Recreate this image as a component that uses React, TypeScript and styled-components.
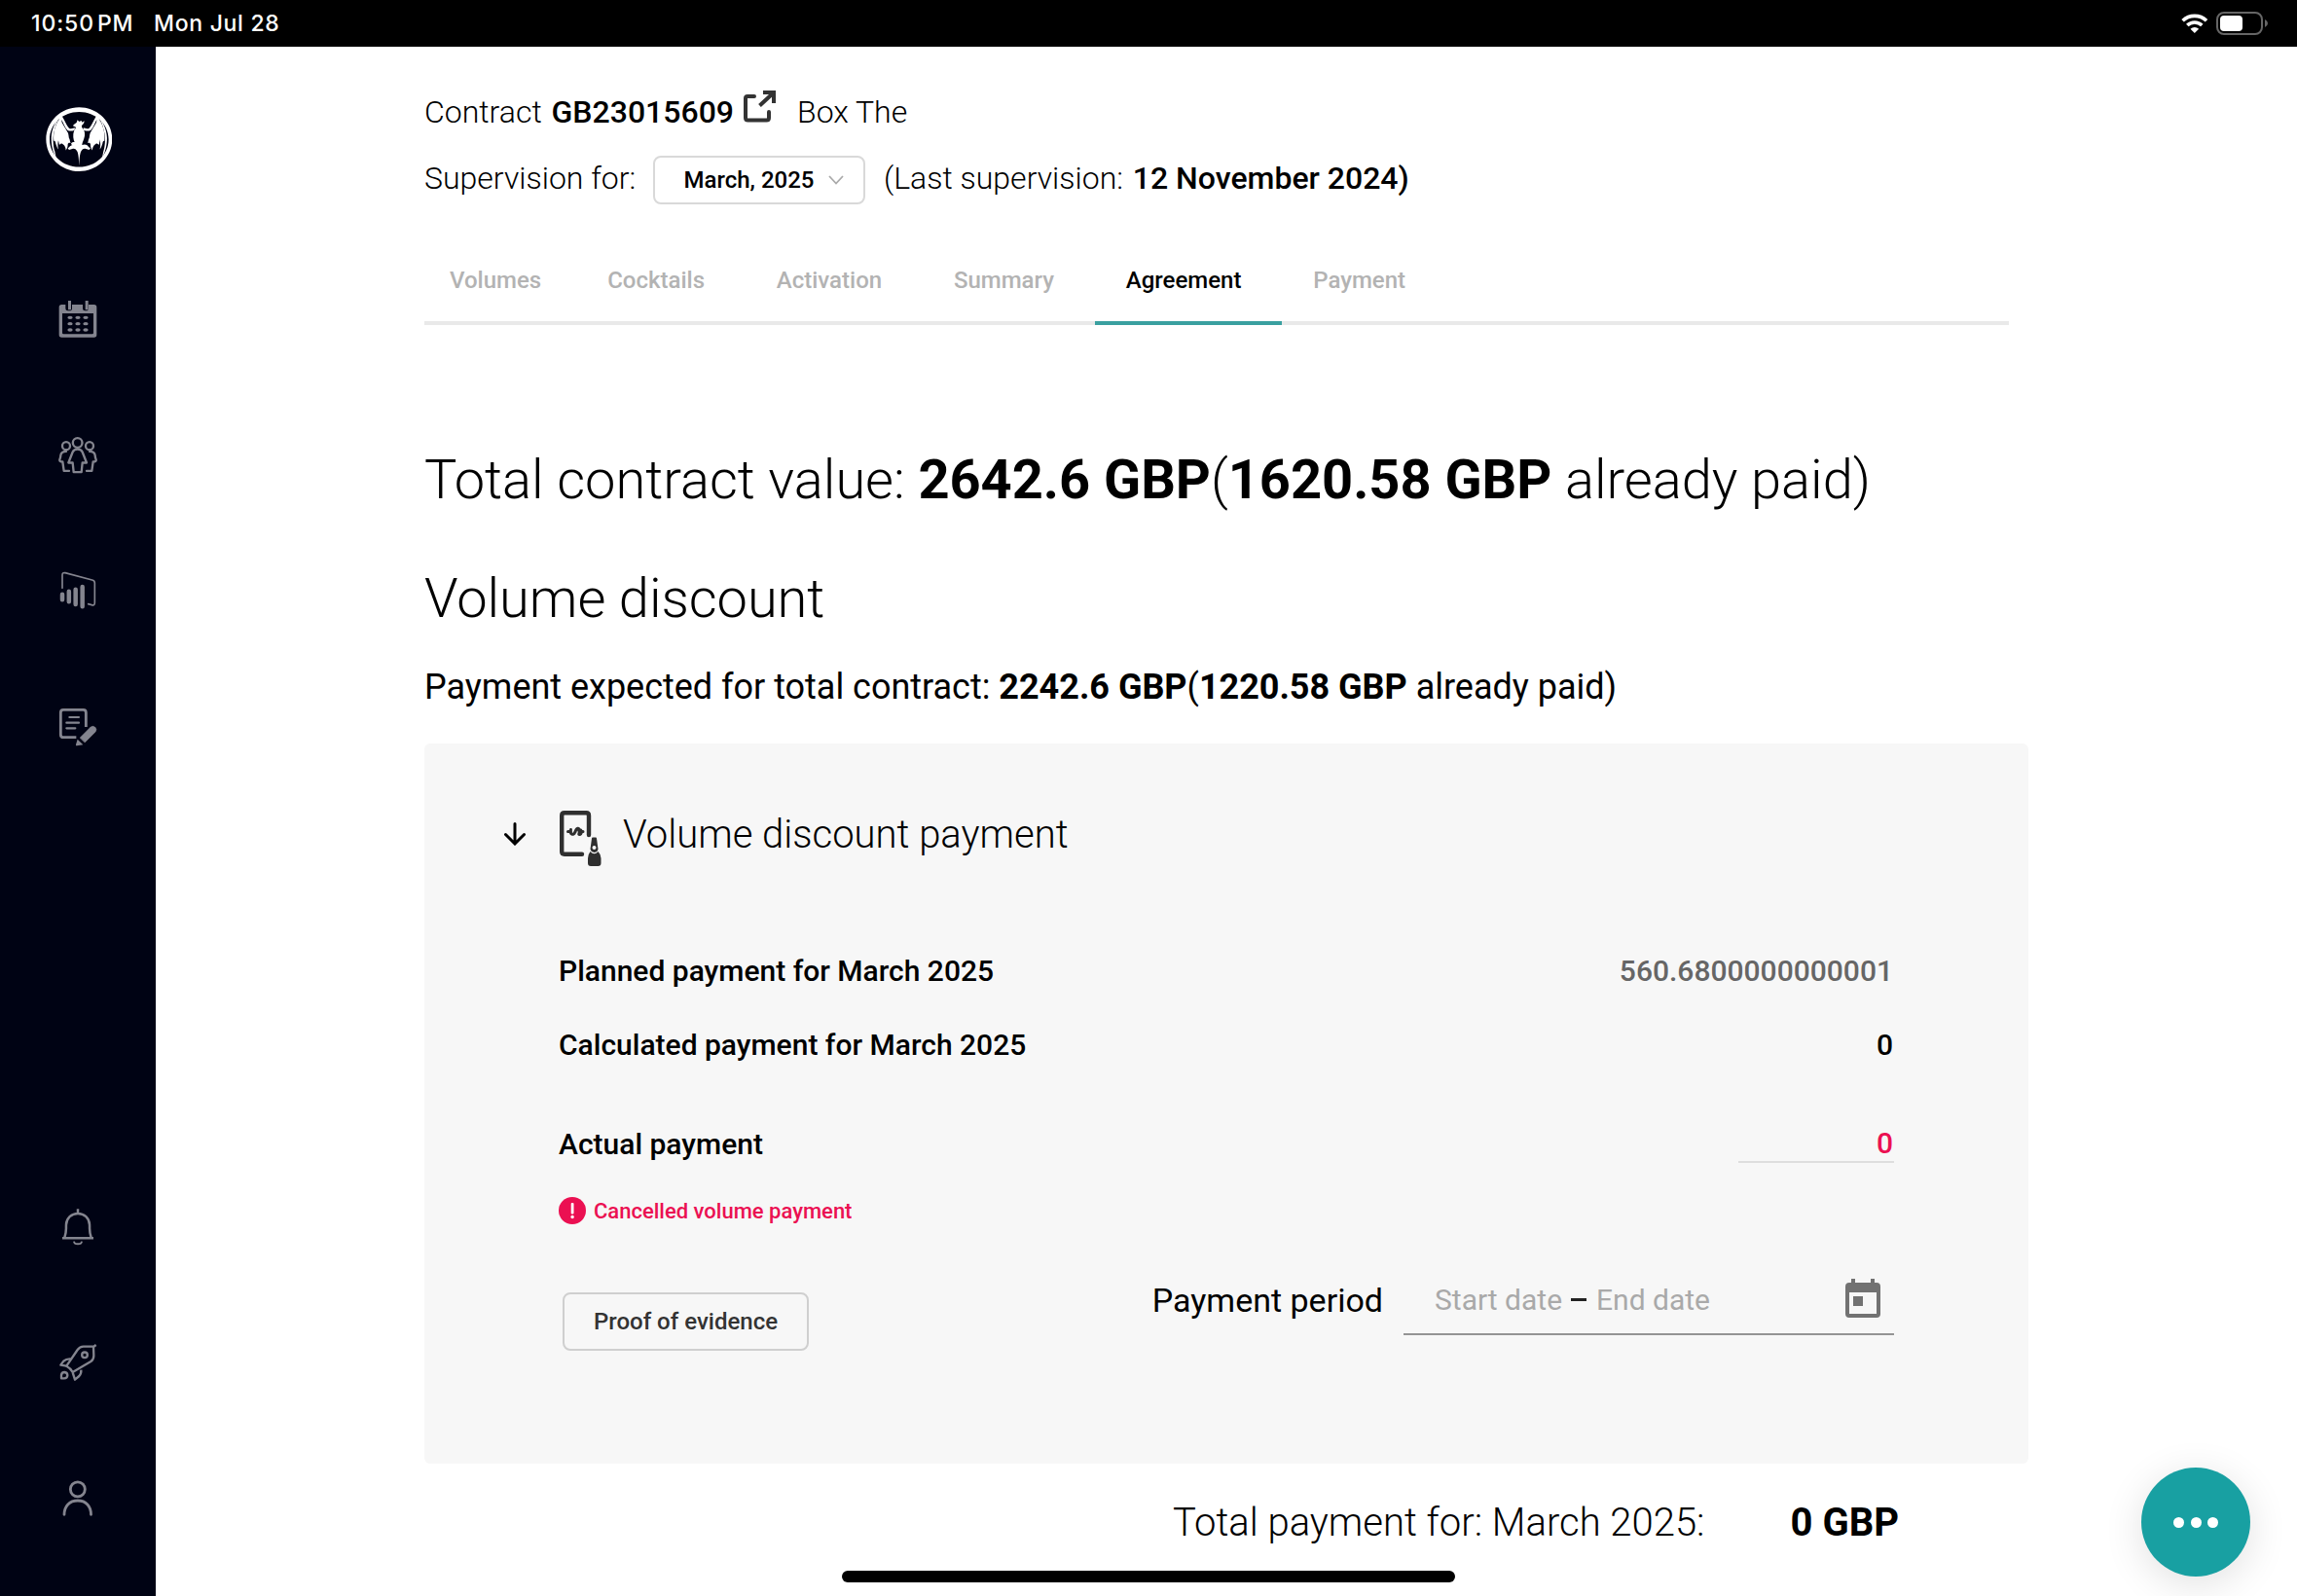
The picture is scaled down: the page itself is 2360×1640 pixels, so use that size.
import React from "react";
import styled, { createGlobalStyle } from "styled-components";

const Global = createGlobalStyle`
  * { box-sizing: border-box; }
  body {
    margin: 0;
    background: #fff;
    color: #000;
    font-family: Roboto, "Liberation Sans", sans-serif;
    font-kerning: normal;
  }
  h1, h2, h3, p { margin: 0; font-weight: 300; }
  button { font-family: inherit; margin: 0; }
  svg { display: block; flex: none; }
`;

const Screen = styled.div`
  position: relative;
  width: 2360px;
  height: 1640px;
  overflow: hidden;
  display: flex;
  flex-direction: column;
`;

const StatusBar = styled.header`
  height: 48px;
  flex: none;
  background: #000;
  color: #fff;
  display: flex;
  align-items: center;
  padding: 0 30px 0 32px;
  font: 450 23px/48px Inter, sans-serif;
`;

const Clock = styled.span`
  letter-spacing: 0.9px;
  word-spacing: -4px;
  width: 126px;
  white-space: nowrap;
`;

const Today = styled.span`
  letter-spacing: 0.7px;
`;

const StatusIcons = styled.div`
  margin-left: auto;
  display: flex;
  align-items: center;
  gap: 8px;
`;

const Body = styled.div`
  flex: 1;
  display: flex;
  min-height: 0;
`;

const Sidebar = styled.aside`
  width: 160px;
  flex: none;
  background: #000314;
  display: flex;
  flex-direction: column;
  padding: 61.5px 0 80px;
`;

const LogoBox = styled.div`
  display: flex;
  justify-content: center;
  padding-left: 2px;
`;

const Nav = styled.nav<{ $bottom?: boolean }>`
  display: flex;
  flex-direction: column;
  align-items: center;
  gap: 99.7px;
  margin-top: ${(p) => (p.$bottom ? "auto" : "132px")};
  color: #84858f;
`;

const NavItem = styled.a`
  width: 40px;
  height: 40px;
`;

const Main = styled.main`
  flex: 1;
  padding: 37px 276px 0;
`;

const ContractRow = styled.div`
  display: flex;
  height: 60px;
  font-size: 32px;
  line-height: 60px;
  font-weight: 300;
  white-space: pre;
`;

const Strong = styled.strong<{ $w?: number }>`
  font-weight: ${(p) => p.$w ?? 500};
`;

const HeaderValue = styled(Strong)`
  margin-left: 2px;
`;

const LinkIcon = styled.span`
  padding: 8px 22px 0 10px;
`;

const SupervisionRow = styled.div`
  display: flex;
  height: 50px;
  margin-top: 15px;
  font-size: 32px;
  line-height: 46px;
  font-weight: 300;
  white-space: pre;
`;

const SupervisionLabel = styled.span`
  width: 235px;
`;

const MonthSelect = styled.button`
  width: 218px;
  height: 50px;
  margin-right: 19px;
  padding: 0 20px 0 29.5px;
  display: flex;
  align-items: center;
  justify-content: space-between;
  background: #fff;
  border: 2px solid #d9d9d9;
  border-radius: 8px;
  color: #000;
  font-size: 24px;
  font-weight: 500;
`;

const Tabs = styled.div`
  display: flex;
  width: 1628px;
  height: 88px;
  margin-top: 36px;
  border-bottom: 4px solid #e9e9e9;
`;

const Tab = styled.button<{ $active?: boolean }>`
  height: 88px;
  padding: 0 41.8px 0 32px;
  border: 0;
  border-bottom: 4px solid ${(p) => (p.$active ? "#3aa0a0" : "transparent")};
  background: none;
  color: ${(p) => (p.$active ? "#000" : "#b3b3b3")};
  font-size: 24px;
  line-height: 84px;
  font-weight: 500;
  &:first-child {
    padding: 0 36px 0 26px;
  }
`;

const TotalValue = styled.h1`
  margin-top: 123px;
  font-size: 56px;
  line-height: 72px;
  letter-spacing: -0.03px;
  white-space: nowrap;
`;

const SectionTitle = styled.h2`
  margin-top: 50px;
  font-size: 56px;
  line-height: 72px;
  letter-spacing: -0.06px;
`;

const Expected = styled.p`
  margin-top: 31px;
  font-size: 36px;
  line-height: 48px;
  font-weight: 400;
  letter-spacing: -0.015px;
  white-space: nowrap;
`;

const Card = styled.section`
  width: 1648px;
  height: 740px;
  margin-top: 34px;
  padding: 63px 138px 0;
  border-radius: 6px;
  background: #f7f7f7;
`;

const CardHeader = styled.div`
  display: flex;
  align-items: center;
  height: 60px;
  margin-left: -56px;
`;

const CardTitle = styled.h3`
  margin: 2px 0 0 23px;
  font-size: 40px;
  line-height: 60px;
`;

const ArrowBox = styled.span`
  width: 22px;
  margin-right: 35px;
`;

const PaymentIconBox = styled.span`
  width: 42px;
  margin-top: 9px;
`;

const Row = styled.div<{ $top: number }>`
  display: flex;
  justify-content: space-between;
  height: 40px;
  margin-top: ${(p) => p.$top}px;
  font-size: 30px;
  line-height: 40px;
  font-weight: 500;
`;

const Value = styled.span<{ $muted?: boolean }>`
  color: ${(p) => (p.$muted ? "#666" : "#000")};
  padding-right: 1px;
`;

const AmountInput = styled.div`
  width: 160px;
  height: 39px;
  border-bottom: 2px solid #dedede;
  color: #eb1052;
  line-height: 38px;
  text-align: right;
  padding-right: 1px;
`;

const Warning = styled.div`
  display: flex;
  align-items: center;
  gap: 8px;
  height: 28px;
  margin-top: 34px;
  color: #eb1052;
  font-size: 22px;
  line-height: 30px;
  font-weight: 500;
`;

const WarningMark = styled.span`
  width: 28px;
  height: 28px;
  border-radius: 50%;
  background: #eb1052;
  display: grid;
  place-items: center;
`;

const WarningText = styled.span`
  padding-top: 2px;
`;

const BottomRow = styled.div`
  display: flex;
  align-items: flex-start;
  height: 88px;
  margin-top: 42px;
`;

const EvidenceButton = styled.button`
  width: 253px;
  height: 60px;
  margin: 28px 0 0 4px;
  border: 2px solid #cfcfcf;
  border-radius: 8px;
  background: transparent;
  color: #333;
  font-size: 24px;
  font-weight: 500;
  padding: 0;
`;

const PeriodLabel = styled.span`
  margin-left: auto;
  font-size: 34px;
  line-height: 72px;
`;

const DateRange = styled.div`
  display: flex;
  align-items: center;
  width: 504px;
  height: 72px;
  margin-left: 21px;
  padding: 0 14px 0 32px;
  border-bottom: 2px solid #949494;
  font-size: 30px;
  line-height: 68px;
  color: #a9a9a9;
  svg {
    margin: -2px 0 0 auto;
  }
`;

const DateText = styled.span`
  padding-top: 2px;
`;

const Dash = styled.span`
  width: 16px;
  height: 3px;
  margin: 0 10px 0 9px;
  background: #222;
`;

const TotalRow = styled.div`
  display: flex;
  justify-content: flex-end;
  gap: 88px;
  width: 1515px;
  margin-top: 31px;
  font-size: 40px;
  line-height: 60px;
  font-weight: 300;
`;

const Fab = styled.button`
  position: absolute;
  left: 2200px;
  top: 1508px;
  width: 112px;
  height: 112px;
  padding: 0;
  border: 0;
  border-radius: 50%;
  background: #18a0a2;
  box-shadow: 0 8px 40px rgba(0, 0, 0, 0.12);
  display: flex;
  align-items: center;
  justify-content: center;
  gap: 6.4px;
`;

const Dot = styled.i`
  width: 11px;
  height: 11px;
  border-radius: 50%;
  background: #fff;
`;

const HomeBar = styled.div`
  position: absolute;
  left: 865px;
  top: 1614px;
  width: 630px;
  height: 12px;
  border-radius: 6px;
  background: #000;
`;

const BatWing = () => (
  <>
    <path d="M186 354C170 372 158 398 157 424c0 24 6 46 15 62l-4-20c-6-20-7-46-1-66c4-16 9-32 19-46z" />
    <path d="M181 366c-12 20-19 44-16 68c3-2 5 2 6 8c2 6 4 12 8 18c-3-14-2-28 3-34c2-4 0-8-1-14c-2-16-3-32 0-46z" />
    <path d="M185 354l6 4c8 12 13 28 21 36c6 4 13 0 18-1l-1 7c-8 3-16 4-22 0c-8-8-12-20-18-32c0 3 0 6 1 9c8 14 14 24 19 32c2 7 2 13 3 16c3 4 2 10 5 15c-4-2-9-1-9 5c0 8-2 12-6 18c0-8-3-14-8-18c-4-5-7-5-12 1c-6-22-8-48-4-70z" />
  </>
);

const BatLogo = () => (
  <svg width="68.6" height="66.6" viewBox="140 329 206 200" fill="#fff">
    <path
      fillRule="evenodd"
      d="M243 330c56 0 102 44 102 98.500s-46 98.500-102 98.500s-102-44-102-98.500S187 330 243 330zM243 344c-52 0-91 38-91 85s39 85 91 85s91-38 91-85s-39-85-91-85z"
    />
    <BatWing />
    <g transform="translate(486 0) scale(-1 1)">
      <BatWing />
    </g>
    <path d="M238 369l5 5l5-2l3 0l1 4l7-4c0 8-5 12-8 14c0 4 0 7 4 10c5 6 6 14 5 22c-2 12-8 20-8 28c10-4 18 0 20 6l6 4l-4 5l-10-3c-8-2-12 2-15 8c-4 8-5 24-6 45c-1-21-2-37-6-45c-3-6-7-10-15-8l-10 3l-4-4l6-6c2-2 5-4 8-4l-4-4c2-6 6-6 11-6c-4-8-6-22-2-34c2-4 5-8 6-12l-9-4c2-5 7-7 11-10z" />
  </svg>
);

const CalendarNav = () => (
  <svg width="40" height="40" viewBox="180 924 120 120" fill="currentColor">
    <path
      fillRule="evenodd"
      d="M210 927h9v28h-9zM263 927h9v28h-9zM190 939h12v12q0 7 7 7h5q8 0 8-7v-12h33v12q0 7 7 7h3q8 0 8-7v-12h17q8 0 8 8v85q0 8-8 8h-100q-8 0-8-8v-85q0-8 8-8zM192 966v60q0 4 4 4h88q4 0 4-4v-60z"
    />
    {[979, 998, 1017].map((y) =>
      [216, 240, 264].map((x) => <ellipse key={`${x}-${y}`} cx={x} cy={y} rx="8" ry="5" />)
    )}
  </svg>
);

const PeopleNav = () => (
  <svg width="40" height="40" viewBox="180 142.500 120 120" fill="none" stroke="currentColor" strokeWidth="7" strokeLinejoin="round" strokeLinecap="round">
    <circle cx="239" cy="163.500" r="14.500" />
    <circle cx="204" cy="173" r="12" />
    <circle cx="276" cy="173" r="12" />
    <path d="M239 183c-8 0-12 3-15 9l-13 33h13l3 29h24l3-29h13l-13-33c-3-6-7-9-15-9z" />
    <path d="M204 190c-10 0-16 5-17 12c0 6-1 8-3 13c-1 4 1 7 9 7l4 28h16" />
    <path d="M276 190c10 0 16 5 17 12c0 6 1 8 3 13c1 4-1 7-9 7l-4 28h-16" />
  </svg>
);

const ReportNav = () => (
  <svg width="40" height="40" viewBox="180 562 120 120" fill="none" stroke="currentColor" strokeLinecap="round" strokeLinejoin="round">
    <path strokeWidth="5" d="M192 614v-40q0-9 9-7l83 22q8 2 8 9v61q0 10-9 7l-11-3" />
    <path strokeWidth="13.500" d="M192 633v17M212.500 624v32M233 618v46M254 610v61" />
  </svg>
);

const NoteNav = () => (
  <svg width="40" height="40" viewBox="180 981 120 120" fill="none" stroke="currentColor" strokeLinecap="round" strokeLinejoin="round">
    <path strokeWidth="8.500" strokeLinecap="butt" d="M265 1041v-44q0-9-8-9h-62q-8 0-8 9v67q0 9 8 9h40" />
    <path strokeWidth="6.500" d="M214 1011h29M205 1028h38M205 1045h27" />
    <path fill="currentColor" strokeWidth="2" d="M247 1074l32-32q7-6 14 0q7 7 1 14l-32 32z" />
    <path fill="currentColor" stroke="none" d="M239 1079l17 17l-19 3q-4 0-3-4z" />
  </svg>
);

const BellNav = () => (
  <svg width="40" height="40" viewBox="180 122 120 120" fill="none" stroke="currentColor" strokeWidth="7.500">
    <path d="M240 126v14M192 215.500h96M199 214c7-22 4-24 5-40c1-20 16-34 36-34s35 14 36 34c1 16-2 18 5 40" />
    <path strokeWidth="6" d="M228 226c1 7 4 8 12 8s11-1 12-8" />
  </svg>
);

const RocketNav = () => (
  <svg width="40" height="40" viewBox="180 539 120 120" fill="none" stroke="currentColor" strokeWidth="7" strokeLinejoin="round">
    <path d="M296 545l-8 6M205 610l34-50q7-10 18-10h31l1 28q0 12-9 18l-56 33q-6-12-19-19z" />
    <circle cx="261" cy="576" r="8.500" />
    <path d="M218 588q-14-1-22 7l-9 12l18 3M250 622q1 12-6 19l-13 11l-7-22" />
    <path d="M189 648v-10q1-9 10-9q9 1 9 10q-1 9-10 9z" />
  </svg>
);

const UserNav = () => (
  <svg width="40" height="40" viewBox="180 959 120 120" fill="none" stroke="currentColor" strokeWidth="8.500" strokeLinecap="round">
    <circle cx="239.500" cy="990" r="22.500" />
    <path d="M198 1068c0-26 16-43 41.500-43s41 17 41 43" />
  </svg>
);

const WifiIcon = () => (
  <svg width="28" height="20" viewBox="0 0 28 20" fill="none" stroke="#fff" strokeWidth="3.600">
    <path d="M1.600 7.300a17.500 17.500 0 0 1 24.400 0M6.300 12a10.800 10.800 0 0 1 15 0" />
    <path fill="#fff" stroke="none" d="M13.800 20l-4.300-4.300a6.200 6.200 0 0 1 8.600 0z" />
  </svg>
);

const BatteryIcon = () => (
  <svg width="53" height="24" viewBox="0 0 53 24">
    <rect x="1" y="1" width="46" height="22" rx="7" fill="none" stroke="#666" strokeWidth="2" />
    <rect x="4" y="4" width="23" height="16" rx="4" fill="#fff" />
    <path d="M50 8q3 1.500 3 4t-3 4z" fill="#666" />
  </svg>
);

const ExternalLink = () => (
  <svg width="33" height="33" viewBox="0 0 33 33" fill="none" stroke="#333" strokeWidth="4">
    <path strokeLinejoin="round" strokeLinecap="round" d="M11 6H4q-2 0-2 2v20q0 2.500 2.500 2.500h19q2.500 0 2.500-2.500v-6" />
    <path d="M16.500 15.500L29.500 3.500M20 2h11v11" />
  </svg>
);

const Chevron = () => (
  <svg width="16" height="10" viewBox="0 0 16 10" fill="none" stroke="#aaa" strokeWidth="1.800">
    <path d="M1 1l7 7.500L15 1" />
  </svg>
);

const ArrowDown = () => (
  <svg width="22" height="24" viewBox="0 0 22 24" fill="none" stroke="#000" strokeWidth="3" strokeLinecap="round">
    <path d="M11 1.500v20M1.500 12.500l9.500 9.500l9.500-9.500" />
  </svg>
);

const PaymentIcon = () => (
  <svg width="43" height="58" viewBox="0 0 43 58">
    <path d="M30 25V5q0-2.700-2.700-2.700H5Q2.200 2.300 2.200 5v37q0 2.700 2.700 2.700H23" fill="none" stroke="#2f2f2f" strokeWidth="4.400" strokeLinecap="round" />
    <path d="M11.500 19.500c-1.500 5 3 6.500 4.300 2.500s4.500-4 4.200-.5M16 22c1.200-5 4-4.500 4.500-1.500c.3 3-2 4 .2 4c1.600-.5 2-2.500 1-4.500M8.500 21.500h3M21.500 21.500h2.500" fill="none" stroke="#2f2f2f" strokeWidth="3" strokeLinecap="round" />
    <path fillRule="evenodd" fill="#2f2f2f" d="M33 28.500q0-1 1-1h3q1 0 1 1l1.500 11q-.500 3-3.800 3.500q-3.500-.500-4.200-3.500zM35.500 36a2 2 0 1 0 .01 0z" />
    <path fill="#2f2f2f" d="M31.500 42q4 4.500 8 0q3 3 3 7v5q0 3-3 3h-7.500q-3 0-3-3v-5q0-4 2.500-7z" />
  </svg>
);

const DateIcon = () => (
  <svg width="36" height="40" viewBox="0 0 36 40" fill="#727272">
    <path fillRule="evenodd" d="M6 0h4v4h16V0h4v4h2q4 0 4 4v28q0 4-4 4H4q-4 0-4-4V8q0-4 4-4h2zM4 14v22h28V14z" />
    <rect x="8" y="18" width="10" height="10" />
  </svg>
);

const Exclamation = () => (
  <svg width="6" height="18" viewBox="0 0 6 18" fill="#fff">
    <rect x="1.700" y="1" width="2.800" height="11.500" rx="1" />
    <circle cx="3.100" cy="15.500" r="1.700" />
  </svg>
);

const tabs = ["Volumes", "Cocktails", "Activation", "Summary", "Agreement", "Payment"];

export default function App() {
  return (
    <Screen>
      <Global />
      <StatusBar>
        <Clock>10:50 PM</Clock>
        <Today>Mon Jul 28</Today>
        <StatusIcons>
          <WifiIcon />
          <BatteryIcon />
        </StatusIcons>
      </StatusBar>
      <Body>
        <Sidebar>
          <LogoBox>
            <BatLogo />
          </LogoBox>
          <Nav>
            <NavItem><CalendarNav /></NavItem>
            <NavItem><PeopleNav /></NavItem>
            <NavItem><ReportNav /></NavItem>
            <NavItem><NoteNav /></NavItem>
          </Nav>
          <Nav $bottom>
            <NavItem><BellNav /></NavItem>
            <NavItem><RocketNav /></NavItem>
            <NavItem><UserNav /></NavItem>
          </Nav>
        </Sidebar>
        <Main>
          <ContractRow>
            <span>Contract </span>
            <HeaderValue>GB23015609</HeaderValue>
            <LinkIcon><ExternalLink /></LinkIcon>
            <span>Box The</span>
          </ContractRow>
          <SupervisionRow>
            <SupervisionLabel>Supervision for:</SupervisionLabel>
            <MonthSelect>
              March, 2025
              <Chevron />
            </MonthSelect>
            <span>(Last supervision: </span>
            <HeaderValue>12 November 2024)</HeaderValue>
          </SupervisionRow>
          <Tabs>
            {tabs.map((name) => (
              <Tab key={name} $active={name === "Agreement"}>{name}</Tab>
            ))}
          </Tabs>
          <TotalValue>
            Total contract value: <Strong $w={700}>2642.6 GBP</Strong>(<Strong $w={700}>1620.58 GBP</Strong> already paid)
          </TotalValue>
          <SectionTitle>Volume discount</SectionTitle>
          <Expected>
            Payment expected for total contract: <Strong $w={700}>2242.6 GBP</Strong>(<Strong $w={700}>1220.58 GBP</Strong> already paid)
          </Expected>
          <Card>
            <CardHeader>
              <ArrowBox><ArrowDown /></ArrowBox>
              <PaymentIconBox><PaymentIcon /></PaymentIconBox>
              <CardTitle>Volume discount payment</CardTitle>
            </CardHeader>
            <Row $top={91}>
              <span>Planned payment for March 2025</span>
              <Value $muted>560.6800000000001</Value>
            </Row>
            <Row $top={36}>
              <span>Calculated payment for March 2025</span>
              <Value>0</Value>
            </Row>
            <Row $top={62}>
              <span>Actual payment</span>
              <AmountInput>0</AmountInput>
            </Row>
            <Warning>
              <WarningMark><Exclamation /></WarningMark>
              <WarningText>Cancelled volume payment</WarningText>
            </Warning>
            <BottomRow>
              <EvidenceButton>Proof of evidence</EvidenceButton>
              <PeriodLabel>Payment period</PeriodLabel>
              <DateRange>
                <DateText>Start date</DateText>
                <Dash />
                <DateText>End date</DateText>
                <DateIcon />
              </DateRange>
            </BottomRow>
          </Card>
          <TotalRow>
            <span>Total payment for: March 2025:</span>
            <Strong $w={700}>0 GBP</Strong>
          </TotalRow>
        </Main>
      </Body>
      <Fab>
        <Dot />
        <Dot />
        <Dot />
      </Fab>
      <HomeBar />
    </Screen>
  );
}
